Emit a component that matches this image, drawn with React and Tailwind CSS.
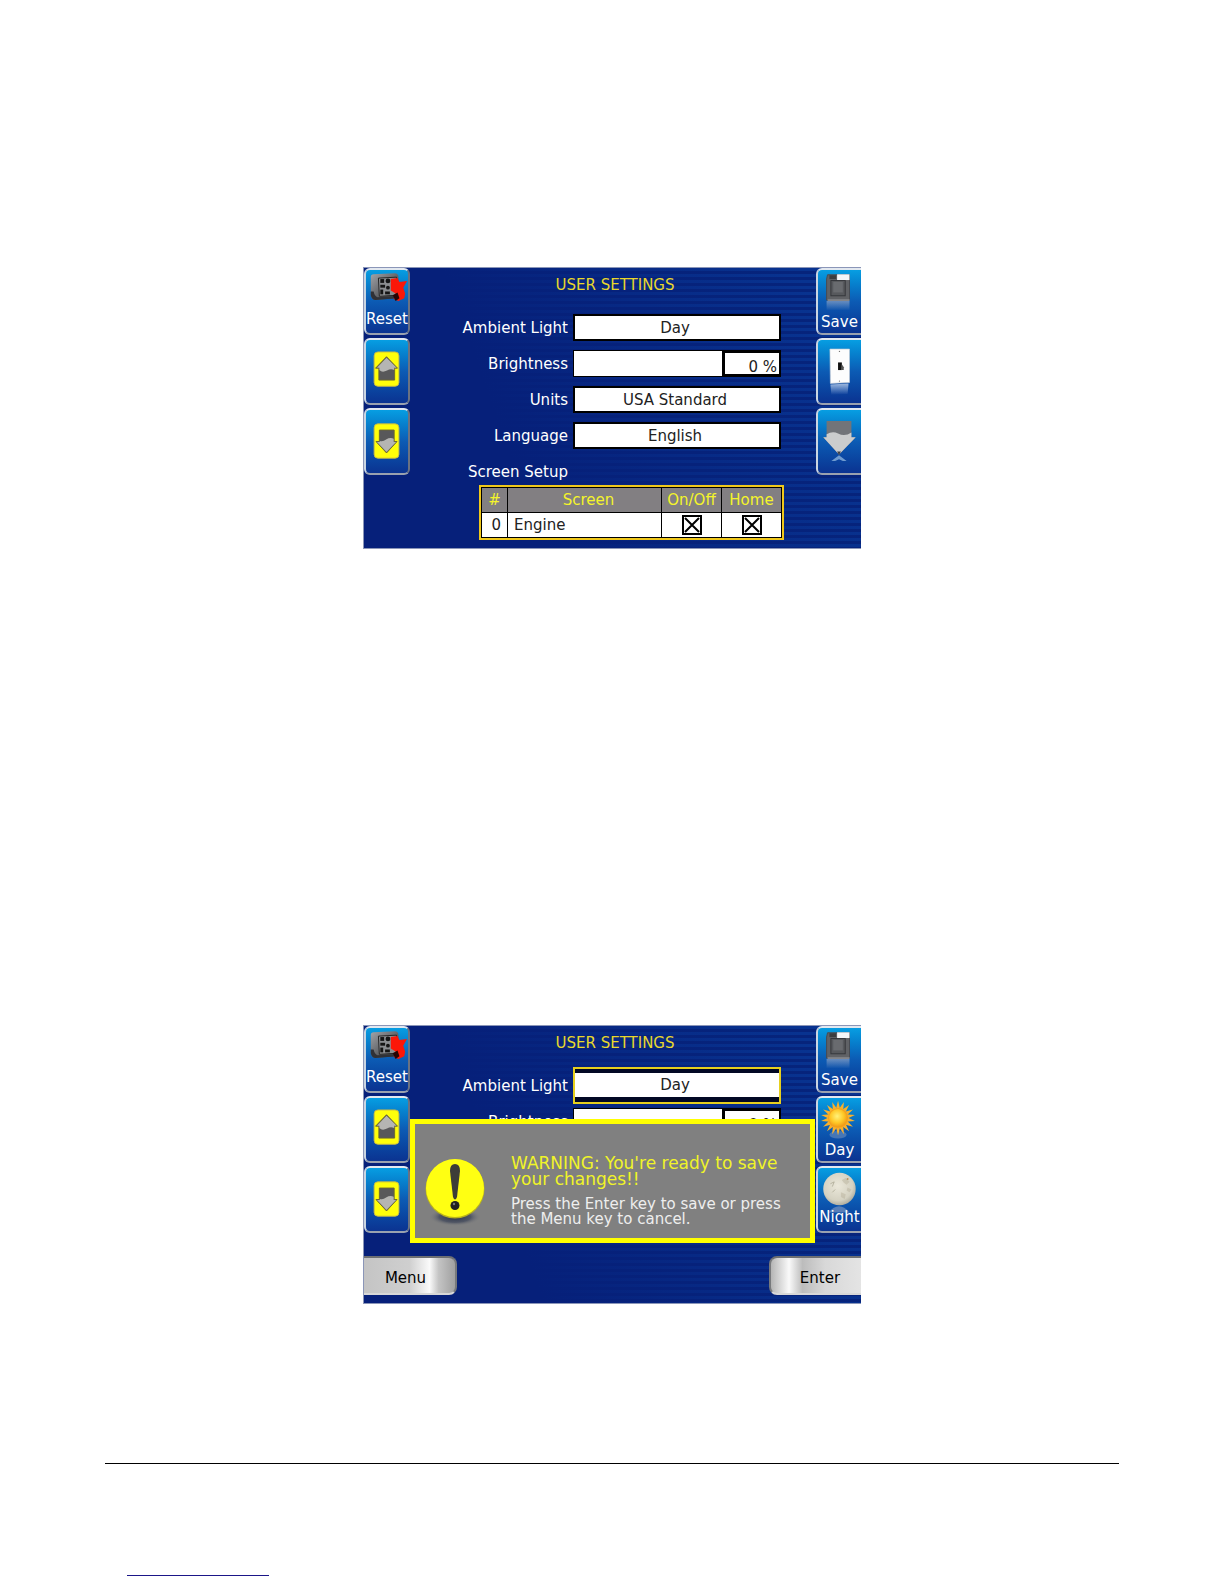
import { useState } from 'react';

const ResetIcon = () => (
    <svg viewBox="0 0 44 65" className="w-full h-full" aria-hidden="true">
        <defs>
            <linearGradient id="caseFill" x1="0" y1="0" x2="1" y2="1">
                <stop offset="0" stopColor="#a2a4a9" />
                <stop offset="0.5" stopColor="#66686c" />
                <stop offset="1" stopColor="#2c2d30" />
            </linearGradient>
        </defs>
        <path d="M8 4 L30 3 Q34 3 34 7 L34 26 Q34 29 31 29 L9 31 Q6 30 5 26 L5 7 Q5 4 8 4Z" fill="url(#caseFill)" />
        <path d="M5 22 L5 26 Q6 31 10 31 L32 29 L32 27 L12 28 Q9 27 8 22 Z" fill="#303136" />
        <path d="M13 8 L32 7 L32 26 L14 27 Z" fill="#8b8d90" stroke="#222" strokeWidth="1" />
        <g fill="#151515">
            <rect x="15" y="9" width="4" height="4" />
            <circle cx="23" cy="11" r="2.5" />
            <rect x="15" y="15" width="5" height="3" />
            <circle cx="23" cy="18" r="2" />
            <rect x="15" y="20" width="3" height="5" />
            <rect x="20" y="22" width="5" height="3" />
        </g>
        <path d="M26 9 L33 8 L35 12 L43 11 L39 18 L41 24 L40 29 L34 32 L29 30 L31 24 L26 21 Z" fill="#fb1708" />
        <path d="M28 26 L33 23 L35 29 L31 32 Z" fill="#250505" />
    </svg>
);

const UpIcon = () => (
    <svg viewBox="0 0 44 65" className="w-full h-full" aria-hidden="true">
        <rect x="8.500" y="12" width="26" height="36" rx="4" fill="#ffff0a" stroke="#c3b64a" />
        <path d="M21.500 17 L33 29 L30 29 L30 41.500 L13.500 41.500 L13.500 29 L10 29 Z" fill="#58585a" stroke="#6c6830" />
        <path d="M21.500 18 L32 28.500 L29.500 28.500 L29.500 31 Q26 29 22 31.500 Q17 34 14 31 L14 28.500 L11.500 28.500 Z" fill="#b5b5b3" />
    </svg>
);

const DownIcon = () => (
    <svg viewBox="0 0 44 65" className="w-full h-full" aria-hidden="true">
        <rect x="8.500" y="14" width="26" height="36" rx="4" fill="#ffff0a" stroke="#c3b64a" />
        <path d="M14 20.500 L29.500 20.500 L29.500 32.500 L32.500 32.500 L21.500 44.500 L10.500 32.500 L14 32.500 Z" fill="#58585a" stroke="#6c6830" />
        <path d="M14.500 32 Q18 33 21 30.500 Q25 28 29 29.500 L29 33 L31.500 33 L21.500 43.500 L11.500 33 L14.500 33 Z" fill="#b5b5b3" />
    </svg>
);

const SaveIcon = () => (
    <svg viewBox="0 0 44 65" className="w-full h-full" aria-hidden="true">
        <defs>
            <linearGradient id="diskGlow" x1="0" y1="0" x2="0" y2="1">
                <stop offset="0" stopColor="#8fa2c4" stopOpacity="0.7" />
                <stop offset="1" stopColor="#8fa2c4" stopOpacity="0" />
            </linearGradient>
        </defs>
        <rect x="9" y="32" width="24" height="10" fill="url(#diskGlow)" />
        <path d="M10 4.500 L33 4.500 L33 31 L9 31 L9 9 Z" fill="#606266" stroke="#494b50" />
        <rect x="13.500" y="10.500" width="15" height="16" fill="#57595d" stroke="#34363a" />
        <rect x="16" y="12" width="10" height="11" fill="#696b6f" />
        <rect x="20" y="4" width="13" height="6" fill="#f4f6f8" />
        <rect x="12" y="5" width="7" height="4" fill="#3b3d40" />
        <rect x="10" y="30" width="23" height="2" fill="#83858a" />
    </svg>
);

const SwitchIcon = () => (
    <svg viewBox="0 0 44 65" className="w-full h-full" aria-hidden="true">
        <defs>
            <linearGradient id="plateGlow" x1="0" y1="0" x2="0" y2="1">
                <stop offset="0" stopColor="#dfe8f8" stopOpacity="0.7" />
                <stop offset="1" stopColor="#dfe8f8" stopOpacity="0" />
            </linearGradient>
        </defs>
        <path d="M13 46 L32 45 L31 56 L14 57 Z" fill="url(#plateGlow)" />
        <path d="M12.500 9 L33 9 L33 44 L13 45 Z" fill="#fdfdfd" stroke="#c5cbd3" strokeWidth="0.700" />
        <rect x="21" y="23" width="4" height="8" fill="#111" />
        <path d="M25 25 L27 28 L27 31 L24 31 Z" fill="#555" />
        <circle cx="22.500" cy="11.500" r="0.700" fill="#777" />
        <circle cx="22.500" cy="42.500" r="0.700" fill="#777" />
    </svg>
);

const BigDownIcon = () => (
    <svg viewBox="0 0 44 65" className="w-full h-full" aria-hidden="true">
        <path d="M9 11 L35 11 L35 28 L39.500 28 L22 46 L5.500 28 L9 28 Z" fill="#727479" />
        <path d="M9 25 Q15 21 21 24 Q28 28 35 23 L35 28 L39.500 28 L22 46 L5.500 28 L9 28 Z" fill="#cbcccd" />
        <path d="M20 43 L24 43 L22 47 Z" fill="#3c3f48" />
        <path d="M22 47 L30 53 L26 53 L22 51 L18 53 L14 53 Z" fill="#6f9bd0" />
    </svg>
);

const SunIcon = () => {
    const rays = Array.from({ length: 18 }, (_, i) => i * 20);
    return (
        <svg viewBox="0 0 44 65" className="w-full h-full" aria-hidden="true">
            <defs>
                <radialGradient id="sunFill" cx="0.45" cy="0.4" r="0.6">
                    <stop offset="0" stopColor="#fff27a" />
                    <stop offset="0.6" stopColor="#ffc928" />
                    <stop offset="1" stopColor="#f09a17" />
                </radialGradient>
            </defs>
            <ellipse cx="21" cy="38" rx="9" ry="4" fill="#7f9ac0" opacity="0.5" />
            {rays.map(a => (
                <path key={a} d="M18.500 12 L21 2.500 L23.500 12 Z" fill="#f9b12c" transform={`rotate(${a} 21 20.500)`} />
            ))}
            <circle cx="21" cy="20.500" r="10.500" fill="#f5a01c" />
            <circle cx="21" cy="20.500" r="9.500" fill="url(#sunFill)" />
        </svg>
    );
};

const MoonIcon = () => (
    <svg viewBox="0 0 44 65" className="w-full h-full" aria-hidden="true">
        <defs>
            <radialGradient id="moonFill" cx="0.45" cy="0.4" r="0.65">
                <stop offset="0" stopColor="#ebe8da" />
                <stop offset="0.7" stopColor="#d5d2c2" />
                <stop offset="1" stopColor="#a3a296" />
            </radialGradient>
        </defs>
        <path d="M11 46 Q22 33 33 46 Z" fill="#8ba0c4" opacity="0.6" />
        <circle cx="22.500" cy="21.500" r="17" fill="url(#moonFill)" />
        <path d="M25 12 L29 10 L33 14 L30 17 L27 15 Z M31 20 L35 22 L33 25 L30 23 Z M24 25 L29 27 L28 32 L24 30 Z" fill="#b5b09a" opacity="0.45" />
        <path d="M13 16 L17 14 L15 19 M18 22 L15 25" fill="none" stroke="#aaa792" strokeWidth="0.800" />
        <circle cx="31" cy="11" r="1" fill="#b98f5a" />
    </svg>
);

const AlertIcon = () => (
    <svg viewBox="0 0 64 68" className="w-16 mt-1 shrink-0" aria-hidden="true">
        <defs>
            <radialGradient id="alertShadow">
                <stop offset="0" stopColor="#2b3348" />
                <stop offset="0.6" stopColor="#444b5d" stopOpacity="0.8" />
                <stop offset="1" stopColor="#808080" stopOpacity="0" />
            </radialGradient>
        </defs>
        <ellipse cx="32" cy="58" rx="26" ry="9" fill="url(#alertShadow)" />
        <circle cx="32" cy="30" r="29.500" fill="#b9b31c" />
        <circle cx="32" cy="29" r="29" fill="#ffff12" />
        <path d="M32 5 Q37 5 37 12 L34 38 Q32 43 30 38 L27 12 Q27 5 32 5Z" fill="#3d3d38" />
        <circle cx="32" cy="46.500" r="4.500" fill="#222" />
        <circle cx="31" cy="45" r="1.200" fill="#777" />
    </svg>
);

const SoftKey = ({ icon, label, name, side = 'left', low }) => (
    <button
        type="button"
        aria-label={label ? undefined : name}
        className={`grid w-full h-[67px] overflow-hidden border-t-2 border-b-2 border-l-2 border-t-slate-200 border-l-slate-300 border-b-gray-400 bg-linear-to-b from-[#079ee2] via-[#0c5bb4] to-[#0b3391] ${side === 'left' ? 'rounded-md border-r-2 border-r-gray-500' : 'rounded-l-md'}`}
    >
        <span className="[grid-area:1/1] w-[42px] h-[63px]">{icon}</span>
        {label && (
            <span className={`[grid-area:1/1] self-end text-center leading-4 text-white whitespace-nowrap ${low ? 'pb-[3px]' : 'pb-1.5'}`}>
                {label}
            </span>
        )}
    </button>
);

const Row = ({ id, label, children }) => (
    <div className="flex items-center h-[27px]">
        <label htmlFor={id} className="flex-1 pr-[5px] text-right text-white">{label}</label>
        <div className="w-[208px] flex items-center">{children}</div>
    </div>
);

const Picker = ({ id, value, active }) => (
    <div className={active ? 'w-full h-[37px] border-2 border-[#e6cf1e] bg-[#020824] py-1' : 'w-full h-[27px]'}>
        <select
            id={id}
            defaultValue={value}
            className={`block w-full appearance-none bg-white pr-1 text-center text-[#222] outline-none ${active ? 'h-6' : 'h-full border-2 border-black'}`}
        >
            <option>{value}</option>
        </select>
    </div>
);

const Brightness = ({ id }) => {
    const [level, setLevel] = useState(0);
    return (
        <>
            <input
                id={id}
                type="range"
                min="0"
                max="100"
                value={level}
                onChange={e => setLevel(Number(e.target.value))}
                className="flex-1 min-w-0 h-[27px] appearance-none border border-r-0 border-black bg-white [&::-webkit-slider-thumb]:appearance-none"
            />
            <output htmlFor={id} className="w-[59px] h-[27px] border-[3px] border-r-2 border-black bg-white pt-1 pr-0.5 text-right leading-5 text-[#222]">
                {level} %
            </output>
        </>
    );
};

const CheckCell = ({ label }) => (
    <td className="border border-black p-0">
        <span className="grid w-5 mx-auto">
            <input type="checkbox" defaultChecked aria-label={label} className="peer [grid-area:1/1] appearance-none size-5 border-2 border-black bg-white" />
            <svg viewBox="0 0 20 20" className="[grid-area:1/1] size-5 pointer-events-none invisible peer-checked:visible" aria-hidden="true">
                <path d="M3 3 L17 17 M17 3 L3 17" stroke="#000" strokeWidth="2" />
            </svg>
        </span>
    </td>
);

const ScreenTable = () => (
    <div className="w-[305px] border-2 border-[#f0c81a]">
        <table className="w-full table-fixed border-collapse bg-white text-[#222]">
            <thead>
                <tr className="h-[25px] bg-[#827f82] text-[#f4f42a]">
                    <th className="w-[26px] border border-black p-0 font-normal">#</th>
                    <th className="border border-black p-0 pl-2 font-normal">Screen</th>
                    <th className="w-[60px] border border-black p-0 font-normal">On/Off</th>
                    <th className="w-[60px] border border-black p-0 font-normal">Home</th>
                </tr>
            </thead>
            <tbody>
                <tr className="h-[25px]">
                    <td className="border border-black p-0 pr-1.5 text-right">0</td>
                    <td className="border border-black p-0 pl-1.5">Engine</td>
                    <CheckCell label="Engine on/off" />
                    <CheckCell label="Engine home" />
                </tr>
            </tbody>
        </table>
    </div>
);

const Display = ({ leftKeys, rightKeys, children, footer }) => (
    <section className="relative w-[498px] max-w-full overflow-hidden border-t border-l border-[#8b96b8] border-b bg-[linear-gradient(70deg,#06207a_30%,transparent_90%),repeating-linear-gradient(#083390_0px,#083390_3px,#06247c_3px,#06247c_6px)] font-['DejaVu_Sans',sans-serif] text-[15px] leading-5">
        <div className="flex">
            <div className="w-[46px] flex flex-col gap-[3px]">{leftKeys}</div>
            <div className="flex-1 min-w-0">
                <h2 className="pt-[7px] pl-1 text-center text-[#e8d82c]">USER SETTINGS</h2>
                <div className="flex flex-col gap-[9px] pt-[19px] pr-[35px]">{children}</div>
            </div>
            <div className="w-[45px] flex flex-col gap-[3px]">{rightKeys}</div>
        </div>
        {footer}
    </section>
);

const navKeys = (
    <>
        <SoftKey icon={<ResetIcon />} label="Reset" />
        <SoftKey icon={<UpIcon />} name="Up" />
        <SoftKey icon={<DownIcon />} name="Down" />
    </>
);

const App = () => {
    return (
        <main className="flex flex-col items-center bg-white pt-[267px]">
            <Display
                leftKeys={navKeys}
                rightKeys={
                    <>
                        <SoftKey side="right" icon={<SaveIcon />} label="Save" low />
                        <SoftKey side="right" icon={<SwitchIcon />} name="Switch" />
                        <SoftKey side="right" icon={<BigDownIcon />} name="Next" />
                    </>
                }
            >
                <Row id="ambient" label="Ambient Light"><Picker id="ambient" value="Day" /></Row>
                <Row id="brightness" label="Brightness"><Brightness id="brightness" /></Row>
                <Row id="units" label="Units"><Picker id="units" value="USA Standard" /></Row>
                <Row id="language" label="Language"><Picker id="language" value="English" /></Row>
                <div>
                    <Row label="Screen Setup" />
                    <div className="flex justify-end -mr-[3px] pb-2">
                        <ScreenTable />
                    </div>
                </div>
            </Display>

            <div className="mt-[476px] w-full flex justify-center">
                <Display
                    leftKeys={navKeys}
                    rightKeys={
                        <>
                            <SoftKey side="right" icon={<SaveIcon />} label="Save" low />
                            <SoftKey side="right" icon={<SunIcon />} label="Day" low />
                            <SoftKey side="right" icon={<MoonIcon />} label="Night" />
                        </>
                    }
                    footer={
                        <>
                            <div className="flex justify-between pt-[23px] pb-2 text-black">
                                <button type="button" className="w-[93px] h-[39px] rounded-r-lg border-y-2 border-r-2 border-t-[#6d6f72] border-r-[#77797c] border-b-[#d8d8d8] bg-[linear-gradient(to_right,#c4c4c4,#cfcfcf_50%,#fafafa_72%,#c4c4c4_82%,#a0a0a0)] pr-2 pt-1">
                                    Menu
                                </button>
                                <button type="button" className="w-[92px] h-[39px] rounded-l-lg border-y-2 border-l-2 border-t-[#6d6f72] border-l-[#77797c] border-b-[#d8d8d8] bg-[linear-gradient(to_right,#b5b5b5,#fafafa_20%,#bcbcbc_35%,#d8d8d8_60%,#e4e4e4)] pl-2 pt-1">
                                    Enter
                                </button>
                            </div>
                            {/* Save confirmation */}
                            <div role="alertdialog" aria-labelledby="warnTitle" className="absolute inset-x-[46px] top-[93px] h-[124px] flex items-start gap-6 border-[5px] border-[#ffff00] bg-[#808080] pl-2 pt-[31px]">
                                <AlertIcon />
                                <div className="flex-1 whitespace-nowrap">
                                    <h3 id="warnTitle" className="text-[17px] leading-4 text-[#f0f428]">
                                        WARNING: You're ready to save<br />your changes!!
                                    </h3>
                                    <p className="pt-2.5 leading-[15px] text-[#eeeeee]">
                                        Press the Enter key to save or press<br />the Menu key to cancel.
                                    </p>
                                </div>
                            </div>
                        </>
                    }
                >
                    <Row id="ambient2" label="Ambient Light"><Picker id="ambient2" value="Day" active /></Row>
                    <Row id="brightness2" label="Brightness"><Brightness id="brightness2" /></Row>
                </Display>
            </div>

            <footer className="w-full px-[105px] pt-[159px] pb-2">
                <hr className="border-t border-black" />
                <hr className="mt-[111px] ml-[22px] w-[142px] border-t border-[#1b1688]" />
            </footer>
        </main>
    );
};

export default App;
